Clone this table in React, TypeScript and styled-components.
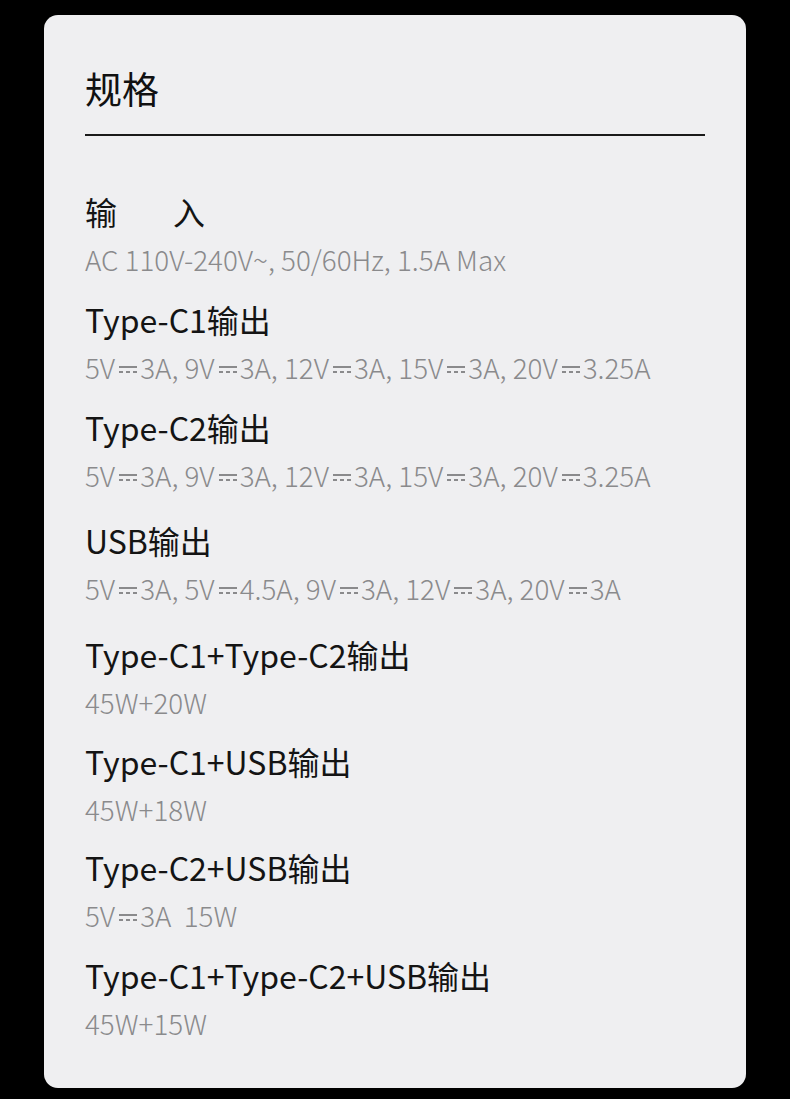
import React from "react";
import styled, { createGlobalStyle } from "styled-components";

const Global = createGlobalStyle`
  html, body { margin: 0; padding: 0; background: #000; }
  body { font-family: "Noto Sans CJK SC", "Noto Sans", sans-serif; }
`;

const Page = styled.div`
  width: 790px;
  height: 1099px;
  background: #000;
  padding: 15px 44px 11px 44px;
  box-sizing: border-box;
`;

const Card = styled.div`
  background: #efeff1;
  border-radius: 14px;
  height: 100%;
  box-sizing: border-box;
  padding: 48px 41px 0 41px;
  display: flex;
  flex-direction: column;
`;

const Title = styled.h1`
  margin: 0;
  font-size: 37px;
  line-height: 50px;
  font-weight: 400;
  color: #111;
`;

const Divider = styled.div`
  height: 2px;
  background: #1a1a1a;
  margin-top: 21px;
  margin-bottom: 55px;
`;

const List = styled.div`
  display: flex;
  flex-direction: column;
`;

const Row = styled.div<{ $extra?: number }>`
  display: flex;
  flex-direction: column;
  gap: 10px;
  margin-top: ${(p) => (p.$extra ?? 0)}px;
`;

const Label = styled.div`
  font-size: 32px;
  line-height: 40px;
  color: #141414;
  font-weight: 400;
  white-space: pre;
`;

const Spacer = styled.span`
  display: inline-block;
  width: 56px;
`;

const Value = styled.div`
  font-size: 27.8px;
  line-height: 36px;
  color: #8a8a8c;
  font-weight: 300;
  white-space: pre;
`;

const Dc = styled.span`
  display: inline-block;
  width: 18px;
  height: 7px;
  margin: 0 3px 0 4px;
  vertical-align: 6px;
  border-top: 2px solid #8a8a8c;
  box-sizing: border-box;
  background-image: linear-gradient(to right, #8a8a8c 0 4px, transparent 4px 7px, #8a8a8c 7px 11px, transparent 11px 14px, #8a8a8c 14px 18px);
  background-size: 18px 2px;
  background-repeat: no-repeat;
  background-position: 0 bottom;
`;

function renderValue(v: string) {
  const parts = v.split("|");
  return parts.map((p, i) => (
    <React.Fragment key={i}>
      {p}
      {i < parts.length - 1 && <Dc />}
    </React.Fragment>
  ));
}

const rows: { label: React.ReactNode; key: string; value: string; extra: number }[] = [
  {
    key: "in",
    label: (
      <>
        输<Spacer />入
      </>
    ),
    value: "AC 110V-240V~, 50/60Hz, 1.5A Max",
    extra: 0,
  },
  { key: "c1", label: "Type-C1输出", value: "5V|3A, 9V|3A, 12V|3A, 15V|3A, 20V|3.25A", extra: 22 },
  { key: "c2", label: "Type-C2输出", value: "5V|3A, 9V|3A, 12V|3A, 15V|3A, 20V|3.25A", extra: 22 },
  { key: "usb", label: "USB输出", value: "5V|3A, 5V|4.5A, 9V|3A, 12V|3A, 20V|3A", extra: 27 },
  { key: "c1c2", label: "Type-C1+Type-C2输出", value: "45W+20W", extra: 28 },
  { key: "c1u", label: "Type-C1+USB输出", value: "45W+18W", extra: 21 },
  { key: "c2u", label: "Type-C2+USB输出", value: "5V|3A  15W", extra: 20 },
  { key: "all", label: "Type-C1+Type-C2+USB输出", value: "45W+15W", extra: 22 },
];

export default function App() {
  return (
    <>
      <Global />
      <Page>
        <Card>
          <Title>规格</Title>
          <Divider />
          <List>
            {rows.map((r) => (
              <Row key={r.key} $extra={r.extra}>
                <Label>{r.label}</Label>
                <Value>{renderValue(r.value)}</Value>
              </Row>
            ))}
          </List>
        </Card>
      </Page>
    </>
  );
}
